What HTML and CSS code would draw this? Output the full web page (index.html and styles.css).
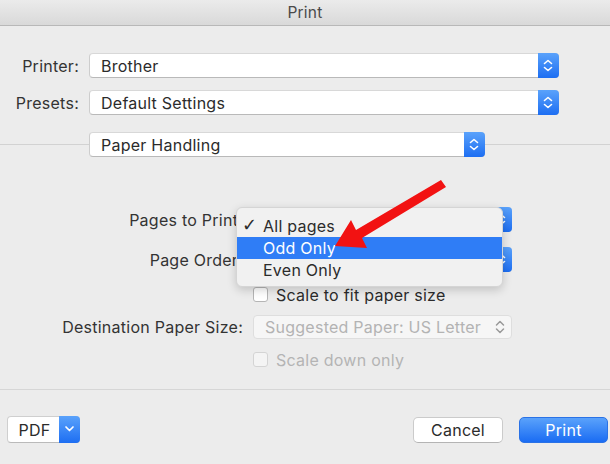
FILE: index.html
```html
<!DOCTYPE html>
<html>
<head>
<meta charset="utf-8">
<link rel="stylesheet" href="styles.css">
</head>
<body>
<div class="window">
  <div class="titlebar">Print</div>

  <div class="top">
    <div class="row">
      <span class="label">Printer:</span>
      <div class="select wide">
        <span class="value">Brother</span>
        <span class="stepper"><svg width="20" height="25" viewBox="0 0 20 25"><path d="M6.5 10.5 L10 7.5 L13.5 10.5 M6.5 14.5 L10 17.5 L13.5 14.5" fill="none" stroke="#fff" stroke-width="1.6" stroke-linecap="round" stroke-linejoin="round"/></svg></span>
      </div>
    </div>
    <div class="row">
      <span class="label">Presets:</span>
      <div class="select wide">
        <span class="value">Default Settings</span>
        <span class="stepper"><svg width="20" height="25" viewBox="0 0 20 25"><path d="M6.5 10.5 L10 7.5 L13.5 10.5 M6.5 14.5 L10 17.5 L13.5 14.5" fill="none" stroke="#fff" stroke-width="1.6" stroke-linecap="round" stroke-linejoin="round"/></svg></span>
      </div>
    </div>
  </div>

  <div class="section-row">
    <div class="line left"></div>
    <div class="select mid">
      <span class="value">Paper Handling</span>
      <span class="stepper"><svg width="20" height="25" viewBox="0 0 20 25"><path d="M6.5 10.5 L10 7.5 L13.5 10.5 M6.5 14.5 L10 17.5 L13.5 14.5" fill="none" stroke="#fff" stroke-width="1.6" stroke-linecap="round" stroke-linejoin="round"/></svg></span>
    </div>
    <div class="line right"></div>
  </div>

  <div class="options">
    <div class="orow">
      <span class="olabel">Pages to Print:</span>
      <div class="select narrow">
        <span class="value"></span>
        <span class="stepper"><svg width="20" height="25" viewBox="0 0 20 25"><path d="M6.5 10.5 L10 7.5 L13.5 10.5 M6.5 14.5 L10 17.5 L13.5 14.5" fill="none" stroke="#fff" stroke-width="1.6" stroke-linecap="round" stroke-linejoin="round"/></svg></span>
      </div>
    </div>
    <div class="orow loose">
      <span class="olabel">Page Order:</span>
      <div class="select narrow">
        <span class="value"></span>
        <span class="stepper"><svg width="20" height="25" viewBox="0 0 20 25"><path d="M6.5 10.5 L10 7.5 L13.5 10.5 M6.5 14.5 L10 17.5 L13.5 14.5" fill="none" stroke="#fff" stroke-width="1.6" stroke-linecap="round" stroke-linejoin="round"/></svg></span>
      </div>
    </div>
    <div class="orow check-row loose">
      <span class="olabel"></span>
      <label class="check"><span class="box"></span>Scale to fit paper size</label>
    </div>
    <div class="orow">
      <span class="olabel">Destination Paper Size:</span>
      <div class="select narrow disabled">
        <span class="value">Suggested Paper: US Letter</span>
        <span class="dstep"><svg width="14" height="24" viewBox="0 0 14 24"><path d="M3.5 10 L7 6.5 L10.5 10 M3.5 14 L7 17.5 L10.5 14" fill="none" stroke="#9a9a9a" stroke-width="1.5" stroke-linecap="round" stroke-linejoin="round"/></svg></span>
      </div>
    </div>
    <div class="orow check-row">
      <span class="olabel"></span>
      <label class="check disabled"><span class="box"></span>Scale down only</label>
    </div>
  </div>

  <div class="footer">
    <div class="pdf">
      <span class="pdf-text">PDF</span>
      <span class="pdf-btn"><svg width="21" height="26" viewBox="0 0 21 26"><path d="M7 11 L10.5 14.5 L14 11" fill="none" stroke="#fff" stroke-width="1.7" stroke-linecap="round" stroke-linejoin="round"/></svg></span>
    </div>
    <div class="spacer"></div>
    <button class="btn cancel">Cancel</button>
    <button class="btn primary">Print</button>
  </div>

  <div class="menu">
    <div class="item"><span class="tick">✓</span>All pages</div>
    <div class="item selected">Odd Only</div>
    <div class="item">Even Only</div>
  </div>

  <svg class="arrow" width="610" height="464" viewBox="0 0 610 464">
    <polygon points="441,180 446,187 362,238 367,248 335,246 351,220 356,230" fill="#f21212"/>
  </svg>
</div>
</body>
</html>
```

FILE: styles.css
```css
* { box-sizing: border-box; }
html, body { margin: 0; padding: 0; }
body {
  width: 610px;
  height: 464px;
  overflow: hidden;
  background: #ececec;
  font-family: Inter, "Liberation Sans", Arial, sans-serif;
  font-size: 16px;
  letter-spacing: 0.25px;
  color: #333;
}
.window {
  position: relative;
  width: 610px;
  height: 464px;
  display: flex;
  flex-direction: column;
}
.titlebar {
  height: 26px;
  border-bottom: 1px solid #b8b8b8;
  background: linear-gradient(#ebebeb, #d9d9d9);
  text-align: center;
  line-height: 25px;
  font-size: 15.5px;
  color: #4a4a4a;
}
.top {
  display: flex;
  flex-direction: column;
  gap: 12px;
  padding-top: 27px;
}
.row {
  display: flex;
  align-items: center;
  gap: 10px;
}
.label {
  width: 79px;
  text-align: right;
  color: #333;
}
.select {
  position: relative;
  height: 25px;
  background: #fff;
  border: 1px solid #cdcdcd;
  border-top-color: #d8d8d8;
  border-bottom-color: #b9b9b9;
  border-radius: 4px;
  display: flex;
  align-items: center;
  padding-left: 11px;
}
.select .value {
  flex: 1;
  white-space: nowrap;
  overflow: hidden;
  color: #2b2b2b;
}
.stepper {
  width: 21px;
  height: 25px;
  margin-right: -1px;
  margin-top: -1px;
  margin-bottom: -1px;
  border-radius: 0 4px 4px 0;
  background: linear-gradient(#5aa2fb, #1d6ef2);
  display: flex;
}
.wide { width: 470px; }
.mid { width: 396px; }
.section-row {
  display: flex;
  align-items: center;
  margin-top: 17px;
}
.line {
  height: 1px;
  background: #d2d2d2;
}
.line.left { width: 89px; }
.line.right { flex: 1; }
.options {
  display: flex;
  flex-direction: column;
  gap: 13px;
  margin-top: 50px;
}
.orow {
  display: flex;
  align-items: center;
  gap: 10px;
}
.orow.loose { margin-top: 2px; }
.olabel {
  width: 243px;
  text-align: right;
  color: #333;
  white-space: nowrap;
}
.narrow { width: 259px; }
.check-row { height: 15px; }
.check {
  display: flex;
  align-items: center;
  gap: 8px;
  color: #2b2b2b;
  white-space: nowrap;
}
.box {
  width: 15px;
  height: 15px;
  background: #fff;
  border: 1px solid #b5b5b5;
  border-radius: 3px;
}
.check.disabled { color: #b4b4b4; }
.check.disabled .box { border-color: #d4d4d4; background: #f4f4f4; }
.select.disabled {
  background: #f6f6f6;
  border-color: #dedede;
  height: 24px;
}
.select.disabled .value { color: #b3b3b3; }
.dstep { width: 14px; height: 24px; display: flex; margin-right: 4px; }
.footer {
  margin-top: 22px;
  border-top: 1px solid #d6d6d6;
  display: flex;
  align-items: center;
  padding: 26px 2px 0 7px;
  gap: 16px;
}
.spacer { flex: 1; }
.pdf {
  width: 73px;
  height: 27px;
  background: #fff;
  border: 1px solid #cfcfcf;
  border-bottom-color: #bababa;
  border-radius: 4px;
  display: flex;
  align-items: center;
}
.pdf-text {
  flex: 1;
  text-align: center;
  color: #2b2b2b;
  padding-left: 2px;
}
.pdf-btn {
  width: 21px;
  height: 27px;
  margin: -1px -1px -1px 0;
  border-radius: 0 4px 4px 0;
  background: linear-gradient(#5aa2fb, #1d6ef2);
  display: flex;
}
.btn {
  height: 26px;
  border-radius: 5px;
  font-family: inherit;
  font-size: 16px;
  letter-spacing: 0.25px;
  padding: 0;
}
.cancel {
  width: 90px;
  background: #fff;
  border: 1px solid #cbcbcb;
  border-bottom-color: #b4b4b4;
  color: #2b2b2b;
}
.primary {
  width: 89px;
  background: linear-gradient(#5aa2fb, #1a6cf3);
  border: 1px solid #2a72e6;
  color: #fff;
}
.menu {
  position: absolute;
  left: 236px;
  top: 207px;
  width: 267px;
  height: 80px;
  padding: 7px 0;
  background: #f1f1f1;
  border: 1px solid #d5d5d5;
  border-radius: 6px;
  box-shadow: 0 3px 10px rgba(0,0,0,0.18);
}
.item {
  position: relative;
  height: 22px;
  line-height: 22px;
  padding-left: 26px;
  color: #2b2b2b;
  white-space: nowrap;
}
.item.selected {
  background: #2f7df6;
  color: #fff;
}
.tick {
  position: absolute;
  left: 5px;
  top: -1px;
  font-size: 18px;
  font-family: "DejaVu Sans", sans-serif;
}
.arrow {
  position: absolute;
  left: 0;
  top: 0;
  pointer-events: none;
}
```
